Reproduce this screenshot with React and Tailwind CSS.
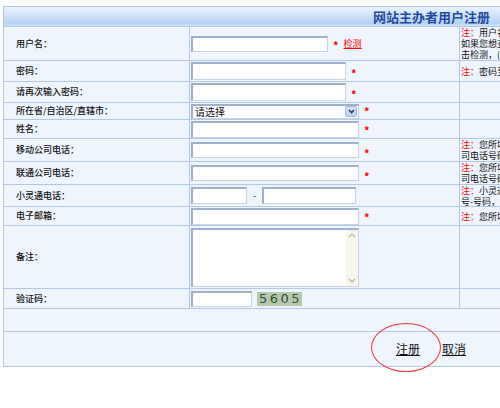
import React from "react";

const cn = "font-['Noto_Sans_CJK_SC','Noto_Sans',sans-serif]";
const inputCls =
  "bg-white border-t-2 border-l-2 border-b border-r border-t-[#9db1ca] border-l-[#9db1ca] border-b-[#c5d3e3] border-r-[#c5d3e3] outline-none";

function Star({ low }) {
  return (
    <span className={"text-[#ff0000] text-[11px] font-bold leading-none ml-[5px] " + (low ? "self-end mb-[2px]" : "")}>*</span>
  );
}

function Note({ lines }) {
  return (
    <div className="whitespace-nowrap text-[9px] leading-[11px] text-[#111]">
      {lines.map((l, i) => (
        <div key={i}>
          {i === 0 ? (
            <>
              <span className="text-[#ff0000]">注：</span>
              {l}
            </>
          ) : (
            l
          )}
        </div>
      ))}
    </div>
  );
}

function Row({ h, label, children, note }) {
  return (
    <div className={"flex border-b border-[#b3c8e6] " + h}>
      <div className="w-[186px] shrink-0 border-r border-[#b3c8e6] flex items-center pl-[12px] text-[9px] font-medium text-[#111]">
        {label}
      </div>
      <div className="w-[270px] shrink-0 border-r border-[#b3c8e6] flex items-center pl-[1px]">{children}</div>
      <div className="flex-1 flex items-center pl-[1px] overflow-hidden">{note && <Note lines={note} />}</div>
    </div>
  );
}

function Select() {
  return (
    <div className={inputCls + " w-[168px] h-[15px] flex items-center justify-between pl-[2px] pr-[1px]"}>
      <span className="text-[10px] leading-none text-[#111]">请选择</span>
      <div className="w-[12px] h-[11px] rounded-[2px] bg-[linear-gradient(#d7e4f7,#b7cdee)] border border-[#a3badf] flex items-center justify-center">
        <svg width="7" height="5" viewBox="0 0 7 5">
          <path d="M1 1 L3.5 3.5 L6 1" fill="none" stroke="#253a6b" strokeWidth="1.6" />
        </svg>
      </div>
    </div>
  );
}

function TextArea() {
  return (
    <div className={inputCls + " w-[168px] h-[59px] flex justify-end"}>
      <div className="w-[12px] h-full bg-[#f8f5ec] flex flex-col items-center justify-between py-[3px]">
        <svg width="8" height="5" viewBox="0 0 8 5">
          <path d="M1 4 L4 1 L7 4" fill="none" stroke="#b3b0a6" strokeWidth="1.2" />
        </svg>
        <svg width="8" height="5" viewBox="0 0 8 5">
          <path d="M1 1 L4 4 L7 1" fill="none" stroke="#b3b0a6" strokeWidth="1.2" />
        </svg>
      </div>
    </div>
  );
}

function Captcha() {
  return (
    <div className="ml-[5px] w-[45px] h-[14px] bg-[#b8c7ae] flex items-center justify-center font-['DejaVu_Sans',sans-serif] text-[13px] leading-none tracking-[2.5px] pl-[2px]">
      <span className="text-[#2f4c4c]">5</span>
      <span className="text-[#1d5b20]">6</span>
      <span className="text-[#2c4c3c]">0</span>
      <span className="text-[#3b5b31]">5</span>
    </div>
  );
}

export default function App() {
  return (
    <div className={"w-[500px] h-[408px] overflow-hidden bg-white " + cn}>
      <div className="ml-[3px] mt-[6px] w-[640px] border-l border-t border-[#b3c8e6] bg-[#eef5fd]">
        <div className="h-[20px] border-b border-[#b3c8e6] bg-[linear-gradient(#e9f2fc,#cfe2f9_45%,#b4d2f4_85%,#d3e5fa)] flex items-center pl-[369px]">
          <span className="text-[13px] font-bold text-[#1f4c9f] leading-none">网站主办者用户注册</span>
        </div>

        <Row
          h="h-[34px]"
          label="用户名："
          note={["用户名由字母、数字或下划线组成，", "如果您想查看用户名是否可用，请点", "击检测，(用户名不能少于4位)"]}
        >
          <input readOnly className={inputCls + " w-[137px] h-[16px]"} />
          <span className="text-[#ff0000] text-[11px] font-bold leading-none ml-[5px] mt-[3px]">*</span>
          <a className="text-[#ff0000] text-[9px] underline ml-[5px]">检测</a>
        </Row>
        <Row h="h-[21px]" label="密码：" note={["密码至少为6位，由字母和数字组成"]}>
          <input readOnly type="password" className={inputCls + " w-[155px] h-[18px]"} />
          <Star low />
        </Row>
        <Row h="h-[21px]" label="请再次输入密码：">
          <input readOnly type="password" className={inputCls + " w-[155px] h-[18px]"} />
          <Star low />
        </Row>
        <Row h="h-[17px]" label="所在省/自治区/直辖市：">
          <Select />
          <Star low />
        </Row>
        <Row h="h-[19px]" label="姓名：">
          <input readOnly className={inputCls + " w-[168px] h-[17px]"} />
          <Star low />
        </Row>
        <Row h="h-[23px]" label="移动公司电话：" note={["您所填写的必须是移动公", "司电话号码，以便联系"]}>
          <input readOnly className={inputCls + " w-[168px] h-[16px]"} />
          <Star low />
        </Row>
        <Row h="h-[23px]" label="联通公司电话：" note={["您所填写的必须是联通公", "司电话号码，以便联系"]}>
          <input readOnly className={inputCls + " w-[168px] h-[16px]"} />
          <Star low />
        </Row>
        <Row h="h-[22px]" label="小灵通电话：" note={["小灵通电话格式为：区", "号-号码，如：010-1234"]}>
          <input readOnly className={inputCls + " w-[56px] h-[17px]"} />
          <span className="text-[9px] text-[#222] mx-[6px]">-</span>
          <input readOnly className={inputCls + " w-[94px] h-[17px]"} />
        </Row>
        <Row h="h-[19px]" label="电子邮箱：" note={["您所填写的邮箱必须真实有效"]}>
          <input readOnly className={inputCls + " w-[168px] h-[17px]"} />
          <Star low />
        </Row>
        <Row h="h-[63px]" label="备注：">
          <TextArea />
        </Row>
        <Row h="h-[20px]" label="验证码：">
          <input readOnly className={inputCls + " w-[61px] h-[16px]"} />
          <Captcha />
        </Row>

        <div className="h-[23px] border-b border-[#b3c8e6]" />

        <div className="relative h-[35px] border-b border-[#b3c8e6] flex items-center pl-[392px] text-[12px] text-[#111]">
          <a className="underline">注册</a>
          <a className="underline ml-[22px]">取消</a>
          <div className="absolute left-[367px] top-[-9px] w-[70px] h-[49px] rounded-[50%] border border-[#e8393a]" />
        </div>
      </div>
    </div>
  );
}
